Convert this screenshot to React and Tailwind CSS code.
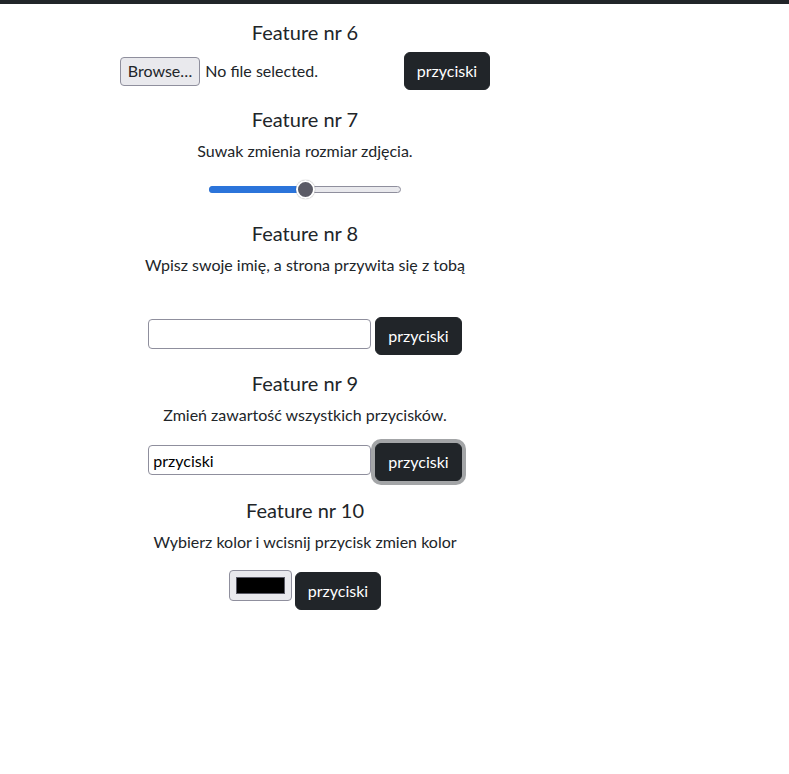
import React from 'react';

const Btn = ({ focused = false }) => (
    <button
        className={
            focused
                ? 'rounded-md bg-[#212529] px-3 py-1.5 text-base leading-6 text-white border border-[#212529] ring-4 ring-[#a3a5a7]'
                : 'rounded-md bg-[#212529] px-3 py-1.5 text-base leading-6 text-white border border-[#212529]'
        }
    >
        przyciski
    </button>
);

const Heading = ({ children }) => (
    <h5 className="text-xl leading-6 font-normal">{children}</h5>
);

const App = () => {
    return (
        <div className="min-h-screen bg-white text-[#212529]" style={{ fontFamily: 'Lato, sans-serif' }}>
            <div className="h-1 bg-[#212529]" />
            <div className="w-[610px] flex flex-col items-center text-center pt-4">
                {/* Feature 6 */}
                <Heading>Feature nr 6</Heading>
                <div className="mt-2 flex items-center gap-1">
                    <div className="w-[280px] flex items-center gap-[5px]">
                        <span className="h-[29px] px-[7px] flex items-center rounded border border-[#8f8f9d] bg-[#e9e9ed] text-base">
                            Browse…
                        </span>
                        <span className="text-base">No file selected.</span>
                    </div>
                    <Btn />
                </div>

                {/* Feature 7 */}
                <div className="mt-[17px]">
                    <Heading>Feature nr 7</Heading>
                </div>
                <p className="mt-2 text-base leading-6">Suwak zmienia rozmiar zdjęcia.</p>
                <div className="mt-4 h-5 w-[192px] flex items-center">
                    <div className="relative h-[7px] w-full rounded-full border border-[#8f8f9d] bg-[#e9e9ed]">
                        <div className="absolute left-[-1px] top-[-1px] h-[7px] w-[97px] rounded-full bg-[#2b74da]" />
                        <div className="absolute left-[86px] top-[-7px] h-[19px] w-[19px] rounded-full border-2 border-white bg-[#5b5b66] shadow-[0_0_1px_rgba(0,0,0,0.5)]" />
                    </div>
                </div>

                {/* Feature 8 */}
                <div className="mt-[22px]">
                    <Heading>Feature nr 8</Heading>
                </div>
                <p className="mt-2 text-base leading-6">Wpisz swoje imię, a strona przywita się z tobą</p>
                <div className="h-6 mt-4" />
                <div className="flex items-start gap-1">
                    <input className="mt-[2px] w-[223px] h-[30px] rounded-sm border border-[#8f8f9d] px-1 text-base" />
                    <Btn />
                </div>

                {/* Feature 9 */}
                <div className="mt-4">
                    <Heading>Feature nr 9</Heading>
                </div>
                <p className="mt-2 text-base leading-6">Zmień zawartość wszystkich przycisków.</p>
                <div className="mt-4 flex items-start gap-1">
                    <input
                        defaultValue="przyciski"
                        className="mt-[2px] w-[223px] h-[30px] rounded-sm border border-[#8f8f9d] px-1 text-base text-black"
                    />
                    <Btn focused />
                </div>

                {/* Feature 10 */}
                <div className="mt-[17px]">
                    <Heading>Feature nr 10</Heading>
                </div>
                <p className="mt-2 text-base leading-6">Wybierz kolor i wcisnij przycisk zmien kolor</p>
                <div className="mt-4 flex items-start gap-[3px]">
                    <div className="w-[63px] h-[31px] rounded border border-[#8f8f9d] bg-[#e9e9ed] flex items-center justify-center">
                        <div className="w-[49px] h-[17px] bg-black border border-[#5b5b66]" />
                    </div>
                    <div className="mt-[2px]">
                        <Btn />
                    </div>
                </div>
            </div>
        </div>
    );
};

export default App;
